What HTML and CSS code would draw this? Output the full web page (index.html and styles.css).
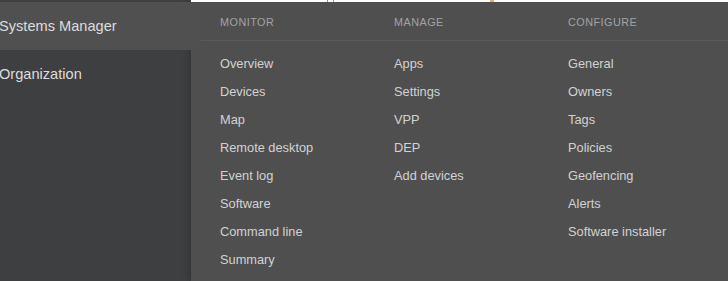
FILE: index.html
```html
<!DOCTYPE html>
<html lang="en">
<head>
  <meta charset="UTF-8" />
  <title>Systems Manager menu</title>
  <link rel="stylesheet" href="styles.css">
</head>
<body>
  <div class="layout">
    <div class="sidebar">
      <div class="side-top"></div>
      <a href="#" class="side-item active">Systems Manager</a>
      <a href="#" class="side-item">Organization</a>
    </div>

    <div class="main">
      <div class="top-strip">
        <span class="mark mark-blue"></span>
        <span class="mark mark-orange"></span>
      </div>

      <div class="menu">
        <div class="menu-head">
          <span>Monitor</span>
          <span>Manage</span>
          <span>Configure</span>
        </div>

        <div class="menu-body">
          <ul class="menu-col">
            <li><a href="#">Overview</a></li>
            <li><a href="#">Devices</a></li>
            <li><a href="#">Map</a></li>
            <li><a href="#">Remote desktop</a></li>
            <li><a href="#">Event log</a></li>
            <li><a href="#">Software</a></li>
            <li><a href="#">Command line</a></li>
            <li><a href="#">Summary</a></li>
          </ul>
          <ul class="menu-col">
            <li><a href="#">Apps</a></li>
            <li><a href="#">Settings</a></li>
            <li><a href="#">VPP</a></li>
            <li><a href="#">DEP</a></li>
            <li><a href="#">Add devices</a></li>
          </ul>
          <ul class="menu-col">
            <li><a href="#">General</a></li>
            <li><a href="#">Owners</a></li>
            <li><a href="#">Tags</a></li>
            <li><a href="#">Policies</a></li>
            <li><a href="#">Geofencing</a></li>
            <li><a href="#">Alerts</a></li>
            <li><a href="#">Software installer</a></li>
          </ul>
        </div>
      </div>
    </div>
  </div>
</body>
</html>
```

FILE: styles.css
```css
* {
  margin: 0;
  padding: 0;
  box-sizing: border-box;
}

body {
  font-family: 'Liberation Sans', Arial, sans-serif;
  background: #3e3f41;
  width: 728px;
  height: 281px;
  overflow: hidden;
}

a {
  text-decoration: none;
  color: inherit;
}

.layout {
  display: flex;
  height: 281px;
}

/* Left navigation */
.sidebar {
  width: 191px;
  flex-shrink: 0;
  display: flex;
  flex-direction: column;
  background: #3e3f41;
}

.side-top {
  height: 2px;
}

.side-item {
  display: block;
  height: 48px;
  line-height: 48px;
  margin-left: -1px;
  font-size: 14.6px;
  color: #dcdcdc;
}

.side-item.active {
  background: #505051;
  margin-right: -10px;
  position: relative;
  z-index: 2;
}

/* Right side */
.main {
  flex: 1;
  display: flex;
  flex-direction: column;
  position: relative;
}

.top-strip {
  height: 2px;
  background: #ffffff;
  position: relative;
}

.mark {
  position: absolute;
  top: 0;
  height: 2px;
}

.mark-blue {
  left: 136px;
  width: 7px;
  border-left: 1px solid #8a86c8;
  border-right: 1px solid #b08a9a;
}

.mark-orange {
  left: 299px;
  width: 4px;
  background: #e0b070;
}

.menu {
  flex: 1;
  background: #4f4f50;
  box-shadow: -3px 0 6px rgba(0, 0, 0, 0.15);
}

.menu-head {
  display: grid;
  grid-template-columns: 174px 174px 174px;
  height: 39px;
  margin: 0 6px 0 9px;
  padding: 2px 0 0 20px;
  border-bottom: 1px solid #5b5b5c;
  align-items: center;
  font-size: 10.8px;
  letter-spacing: 0.5px;
  text-transform: uppercase;
  color: #a3a3a4;
}

.menu-body {
  display: grid;
  grid-template-columns: 174px 174px 174px;
  padding: 9px 0 0 29px;
}

.menu-col {
  list-style: none;
}

.menu-col li {
  height: 28px;
  line-height: 28px;
  font-size: 12.8px;
  color: #d2d2d2;
}
```
